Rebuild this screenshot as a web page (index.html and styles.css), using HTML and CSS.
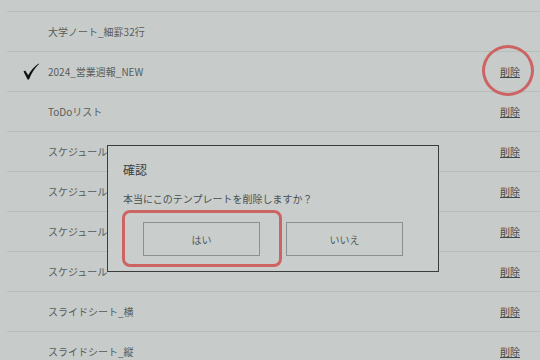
FILE: index.html
```html
<!DOCTYPE html>
<html lang="ja">
<head>
    <meta charset="UTF-8">
    <meta name="viewport" content="width=device-width, initial-scale=1.0">
    <title>テンプレート管理</title>
    <link rel="stylesheet" href="styles.css">
</head>
<body>
    <div class="screen">
        <ul class="template-list">
            <li class="row">
                <span class="check"></span>
                <span class="name">大学ノート_細罫32行</span>
            </li>
            <li class="row">
                <span class="check">
                    <svg width="16" height="17" viewBox="0 0 16 17">
                        <path d="M0.5 8.6 L2.2 7.6 L5.2 12.2 Q9 5 15.6 0.4 L16 1 Q10 6.5 6 16.4 L4.6 16.4 Z" fill="#111"/>
                    </svg>
                </span>
                <span class="name">2024_営業週報_NEW</span>
                <a class="delete" href="#">削除</a>
            </li>
            <li class="row">
                <span class="check"></span>
                <span class="name">ToDoリスト</span>
                <a class="delete" href="#">削除</a>
            </li>
            <li class="row">
                <span class="check"></span>
                <span class="name">スケジュール_月間</span>
                <a class="delete" href="#">削除</a>
            </li>
            <li class="row">
                <span class="check"></span>
                <span class="name">スケジュール_週間</span>
                <a class="delete" href="#">削除</a>
            </li>
            <li class="row">
                <span class="check"></span>
                <span class="name">スケジュール_日間</span>
                <a class="delete" href="#">削除</a>
            </li>
            <li class="row">
                <span class="check"></span>
                <span class="name">スケジュール</span>
                <a class="delete" href="#">削除</a>
            </li>
            <li class="row">
                <span class="check"></span>
                <span class="name">スライドシート_横</span>
                <a class="delete" href="#">削除</a>
            </li>
            <li class="row">
                <span class="check"></span>
                <span class="name">スライドシート_縦</span>
                <a class="delete" href="#">削除</a>
            </li>
        </ul>

        <div class="dialog">
            <div class="dialog-title">確認</div>
            <div class="dialog-text">本当にこのテンプレートを削除しますか？</div>
            <div class="dialog-buttons">
                <button class="btn">はい</button>
                <button class="btn">いいえ</button>
            </div>
        </div>

        <!-- red annotation marks -->
        <div class="mark-circle"></div>
        <div class="mark-box"></div>
    </div>
</body>
</html>
```

FILE: styles.css
```css
/* e-ink style template list with confirm dialog */
body {
    margin: 0;
    padding: 0;
    background-color: #c7cccb;
    font-family: "Noto Sans CJK JP", "Noto Sans", sans-serif;
    color: #575c5b;
}

.screen {
    position: relative;
    width: 540px;
    height: 360px;
    overflow: hidden;
}

.template-list {
    list-style: none;
    margin: 11px 0 0 7px;
    padding: 0;
}

.row {
    display: flex;
    align-items: center;
    height: 40px;
    box-sizing: border-box;
    border-top: 1px solid #b8bdbc;
    font-size: 10px;
}

.check {
    width: 41px;
    display: flex;
    justify-content: center;
    padding-left: 7px;
    box-sizing: border-box;
}

.name {
    flex: 1;
    white-space: nowrap;
}

.delete {
    margin-right: 20px;
    color: #444948;
    text-decoration: underline;
}

.dialog {
    position: absolute;
    left: 107px;
    top: 145px;
    width: 332px;
    height: 127px;
    box-sizing: border-box;
    padding: 14px 15px;
    border: 1px solid #3a3d3c;
    background-color: #c9cecd;
}

.dialog-title {
    font-size: 12px;
    line-height: 20px;
    color: #3c403f;
}

.dialog-text {
    margin-top: 11px;
    font-size: 10px;
    line-height: 16px;
    color: #4a4e4d;
}

.dialog-buttons {
    display: flex;
    gap: 26px;
    margin-top: 15px;
    padding-left: 20px;
}

.btn {
    width: 117px;
    height: 34px;
    border: 1px solid #8c9190;
    background-color: #c9cecd;
    font-family: "Noto Sans CJK JP", sans-serif;
    font-size: 10px;
    color: #555a59;
    padding: 0;
}

.mark-circle {
    position: absolute;
    left: 482px;
    top: 45px;
    width: 52px;
    height: 51px;
    box-sizing: border-box;
    border: 3px solid #cd6464;
    border-radius: 50%;
}

.mark-box {
    position: absolute;
    left: 122px;
    top: 210px;
    width: 160px;
    height: 57px;
    box-sizing: border-box;
    border: 3px solid #cd6464;
    border-radius: 8px;
}
```
